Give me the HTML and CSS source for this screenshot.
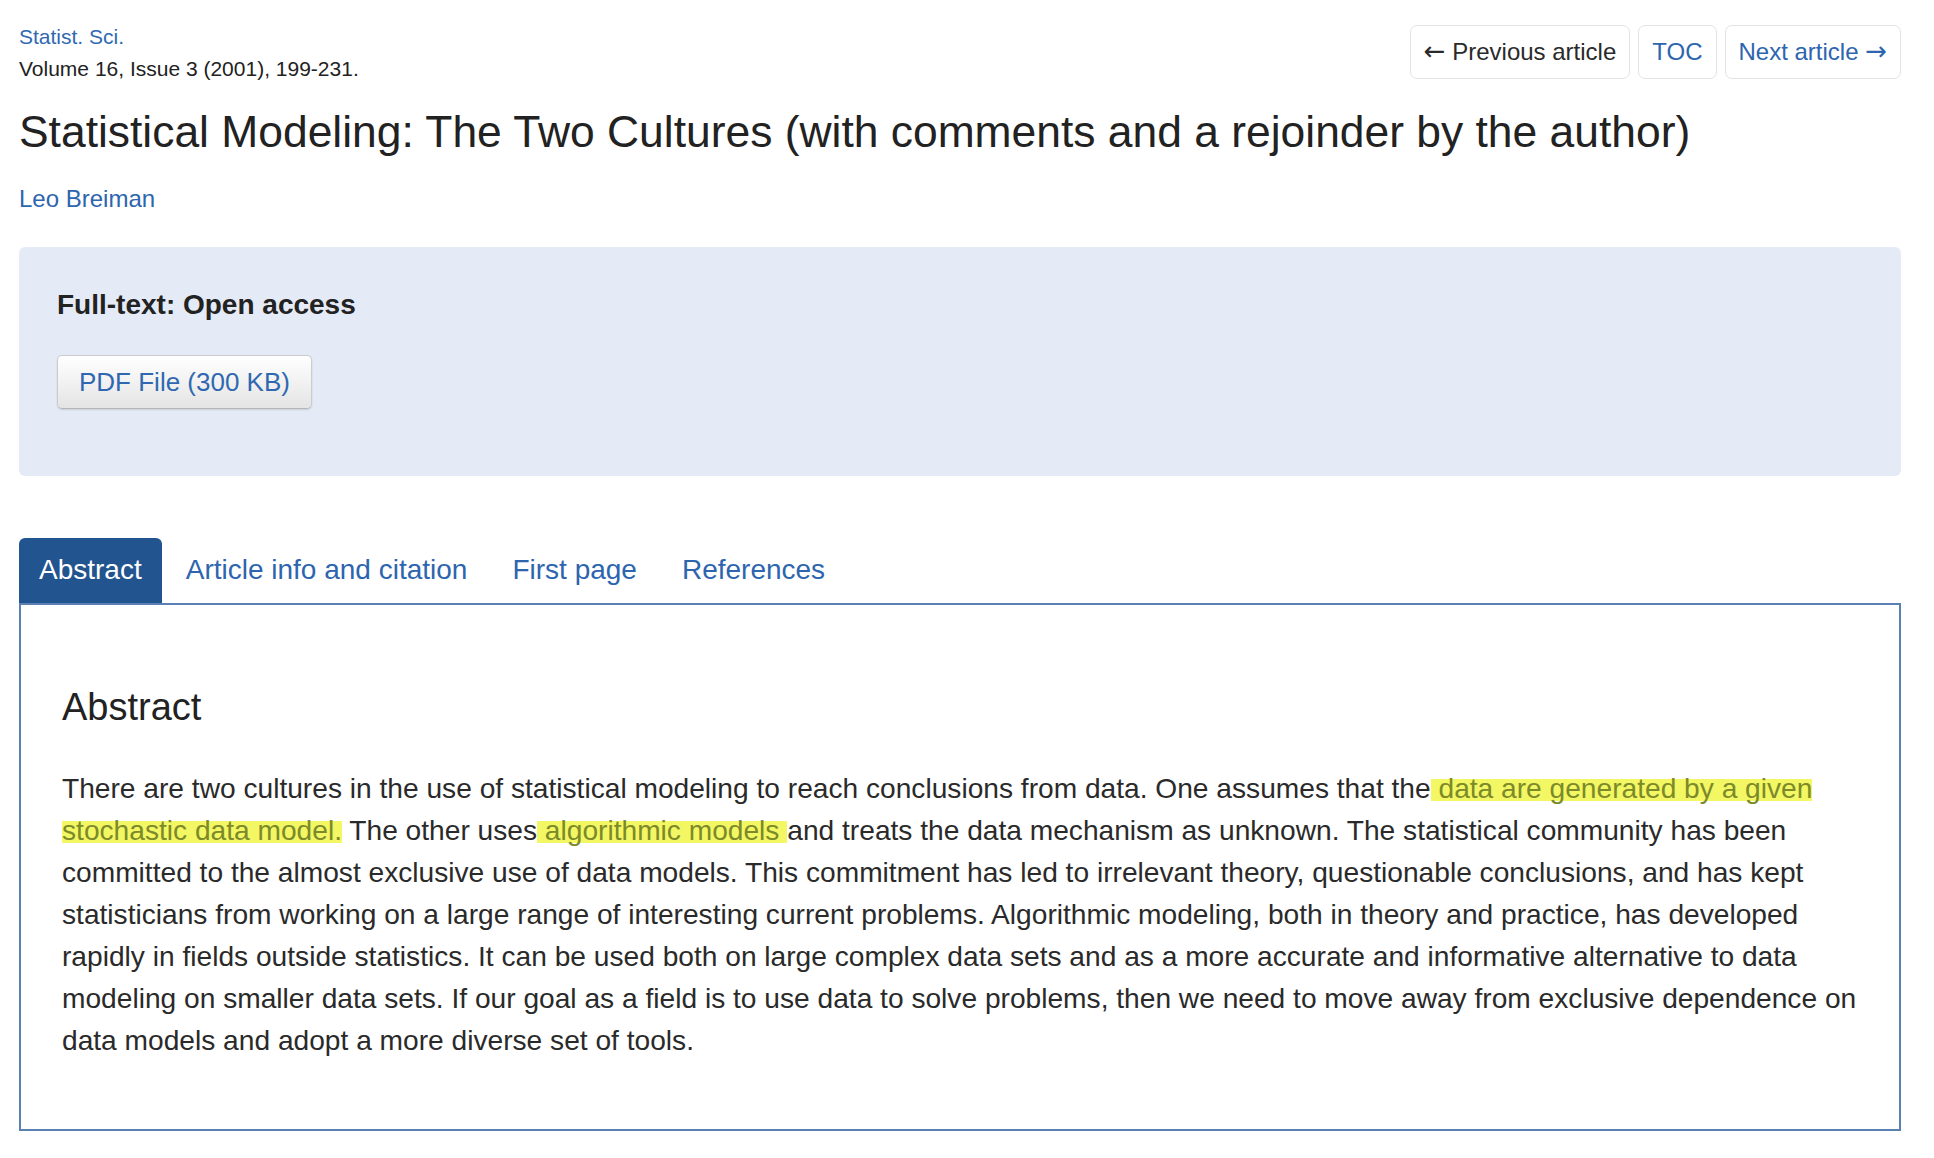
FILE: index.html
```html
<!DOCTYPE html>
<html lang="en">
<head>
<meta charset="utf-8">
<title>Statistical Modeling: The Two Cultures</title>
<link rel="stylesheet" href="styles.css">
</head>
<body>
<div class="page">
  <div class="top">
    <div class="journal">
      <a href="#" class="jlink">Statist. Sci.</a>
      <div class="volume">Volume 16, Issue 3 (2001), 199-231.</div>
    </div>
    <nav class="artnav">
      <a href="#" class="navbtn prev"><span class="arr">&larr;</span> Previous article</a>
      <a href="#" class="navbtn">TOC</a>
      <a href="#" class="navbtn">Next article <span class="arr">&rarr;</span></a>
    </nav>
  </div>
  <h1 class="title">Statistical Modeling: The Two Cultures (with comments and a rejoinder by the author)</h1>
  <div class="author"><a href="#">Leo Breiman</a></div>

  <div class="panel">
    <div class="ft">Full-text: Open access</div>
    <a href="#" class="pdfbtn">PDF File (300 KB)</a>
  </div>

  <ul class="tabs">
    <li class="tab active"><a href="#">Abstract</a></li>
    <li class="tab"><a href="#">Article info and citation</a></li>
    <li class="tab"><a href="#">First page</a></li>
    <li class="tab"><a href="#">References</a></li>
  </ul>
  <div class="tabbox">
    <h2 class="abs-h">Abstract</h2>
    <p class="abs-p">There are two cultures in the use of statistical modeling to reach conclusions from data. One assumes that the<mark class="hl"> data are generated by a given </mark><mark class="hl">stochastic data model.</mark> The other uses<mark class="hl"> algorithmic models </mark>and treats the data mechanism as unknown. The statistical community has been committed to the almost exclusive use of data models. This commitment has led to irrelevant theory, questionable conclusions, and has kept statisticians from working on a large range of interesting current problems. Algorithmic modeling, both in theory and practice, has developed rapidly in fields outside statistics. It can be used both on large complex data sets and as a more accurate and informative alternative to data modeling on smaller data sets. If our goal as a field is to use data to solve problems, then we need to move away from exclusive dependence on data models and adopt a more diverse set of tools.</p>
  </div>
</div>
</body>
</html>
```
FILE: styles.css
```css
html, body {
  margin: 0;
  padding: 0;
  background: #ffffff;
}
body {
  font-family: "Liberation Sans", Arial, Helvetica, sans-serif;
  color: #222222;
}
a {
  color: #2d65ae;
  text-decoration: none;
}
.page {
  padding: 21px 33px 0 19px;
}
.top {
  display: flex;
  justify-content: space-between;
  align-items: flex-start;
}
.journal {
  font-size: 21px;
  line-height: 32px;
}
.jlink {
  display: block;
  color: #3069b2;
}
.volume {
  color: #222222;
}
.artnav {
  display: flex;
  gap: 8px;
  margin-top: 4px;
}
.navbtn {
  font-size: 24px;
  line-height: 28px;
  padding: 12px 13px;
  border: 1px solid #e3e3e3;
  border-radius: 7px;
  color: #2d65ae;
  background: #ffffff;
}
.navbtn.prev {
  color: #2a2a2a;
}
.arr {
  font-family: "DejaVu Sans", sans-serif;
  font-size: 26px;
  line-height: 20px;
}
.title {
  font-size: 44.4px;
  font-weight: normal;
  line-height: 48px;
  margin: 23px 0 0;
  color: #222222;
}
.author {
  margin-top: 26px;
  font-size: 24px;
  line-height: 34px;
}
.panel {
  margin-top: 31px;
  background: #e4ebf6;
  border-radius: 6px;
  padding: 41px 38px 67px;
}
.ft {
  font-size: 28px;
  font-weight: bold;
  line-height: 34px;
  color: #222222;
}
.pdfbtn {
  display: inline-block;
  margin-top: 33px;
  font-size: 26px;
  line-height: 30px;
  padding: 11px 21px;
  border: 1px solid #cccccc;
  border-bottom-color: #b5b5b5;
  border-radius: 5px;
  background: linear-gradient(#ffffff, #e4e4e4);
  box-shadow: 0 1px 2px rgba(0, 0, 0, 0.12);
  color: #2f68b1;
}
.tabs {
  list-style: none;
  margin: 62px 0 0;
  padding: 0;
  display: flex;
  gap: 3px;
}
.tab a {
  display: block;
  font-size: 28px;
  line-height: 32px;
  padding: 16px 21px 17px;
  border-radius: 6px 6px 0 0;
  color: #2d65ae;
}
.tab.active a {
  background: #22548f;
  color: #ffffff;
  padding: 16px 20px 17px;
}
.tabbox {
  border: 2px solid #5b80b4;
  padding: 81px 36px 67px 41px;
}
.abs-h {
  font-size: 38px;
  font-weight: normal;
  line-height: 42px;
  margin: 0;
  color: #222222;
}
.abs-p {
  margin: 40px 0 0;
  font-size: 28.15px;
  line-height: 42px;
  color: #2a2a2a;
}
.hl {
  color: #7c8a2a;
  background: linear-gradient(transparent 20%, #f3f763 20%, #f3f763 90%, transparent 90%);
  -webkit-box-decoration-break: clone;
  box-decoration-break: clone;
}
```
